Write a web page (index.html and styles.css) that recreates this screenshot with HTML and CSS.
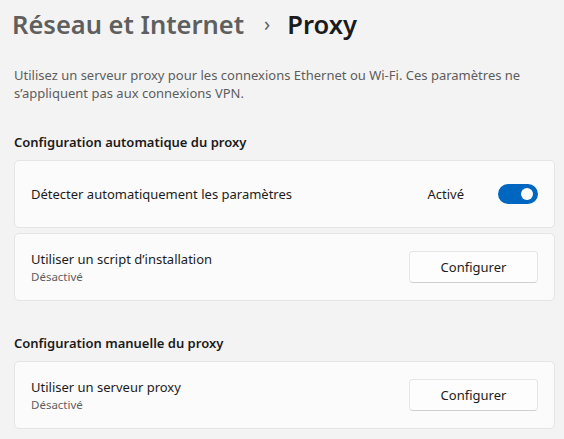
FILE: index.html
```html
<!DOCTYPE html>
<html lang="fr">

<head>
    <meta charset="UTF-8">
    <meta name="viewport" content="width=device-width, initial-scale=1.0">
    <title>Proxy</title>
    <link rel="stylesheet" href="styles.css">
</head>

<body>
    <div class="page">
        <h1 class="crumbs">
            <span class="parent">Réseau et Internet</span>
            <span class="sep">&#8250;</span>
            <span class="current">Proxy</span>
        </h1>

        <p class="intro">Utilisez un serveur proxy pour les connexions Ethernet ou Wi-Fi. Ces paramètres ne s’appliquent pas aux connexions VPN.</p>

        <h2 class="group_title first">Configuration automatique du proxy</h2>
        <div class="card">
            <div class="label">
                <span class="name">Détecter automatiquement les paramètres</span>
            </div>
            <div class="action">
                <span class="state">Activé</span>
                <span class="toggle on"><span class="knob"></span></span>
            </div>
        </div>
        <div class="card">
            <div class="label">
                <span class="name">Utiliser un script d’installation</span>
                <span class="sub">Désactivé</span>
            </div>
            <div class="action">
                <button class="btn">Configurer</button>
            </div>
        </div>

        <h2 class="group_title">Configuration manuelle du proxy</h2>
        <div class="card">
            <div class="label">
                <span class="name">Utiliser un serveur proxy</span>
                <span class="sub">Désactivé</span>
            </div>
            <div class="action">
                <button class="btn">Configurer</button>
            </div>
        </div>
    </div>
</body>

</html>
```

FILE: styles.css
```css
* {
    margin: 0;
    padding: 0;
    box-sizing: border-box;
}

body {
    background: #f3f3f3;
    color: #1b1b1b;
    font-family: "Segoe UI", "Noto Sans", sans-serif;
    font-size: 13px;
}

.page {
    padding: 0 9px 0 14px;
}

.crumbs {
    display: flex;
    align-items: baseline;
    height: 50px;
    padding-top: 7px;
    margin-left: -2px;
    font-size: 25.5px;
    font-weight: 600;
}

.crumbs .parent {
    color: #5f5f5f;
}

.crumbs .sep {
    color: #5f5f5f;
    font-size: 20px;
    font-weight: 400;
    margin: 0 17px 0 20px;
    position: relative;
    top: -3px;
}

.crumbs .current {
    color: #1b1b1b;
}

.intro {
    margin-top: 16px;
    line-height: 18px;
    color: #5d5d5d;
    width: 530px;
}

.group_title {
    font-size: 13px;
    font-weight: 600;
    line-height: 20px;
    margin: 32px 0 8px;
}

.group_title.first {
    margin-top: 30px;
}

.card {
    display: flex;
    align-items: center;
    justify-content: space-between;
    height: 68px;
    margin-bottom: 5px;
    padding: 0 16px;
    background: #fbfbfb;
    border: 1px solid #e5e5e5;
    border-radius: 5px;
}

.label {
    display: flex;
    flex-direction: column;
}

.name {
    line-height: 19px;
}

.sub {
    font-size: 11.5px;
    line-height: 16px;
    color: #5f5f5f;
}

.action {
    display: flex;
    align-items: center;
}

.state {
    margin-right: 34px;
}

.toggle {
    position: relative;
    width: 40px;
    height: 20px;
    border-radius: 10px;
    background: #0067c0;
}

.toggle .knob {
    position: absolute;
    top: 4px;
    right: 5px;
    width: 12px;
    height: 12px;
    border-radius: 50%;
    background: #fff;
}

.btn {
    width: 129px;
    height: 32px;
    font-family: inherit;
    font-size: 13px;
    color: #1b1b1b;
    background: #fdfdfd;
    border: 1px solid #e5e5e5;
    border-bottom-color: #cfcfcf;
    border-radius: 4px;
}
```
